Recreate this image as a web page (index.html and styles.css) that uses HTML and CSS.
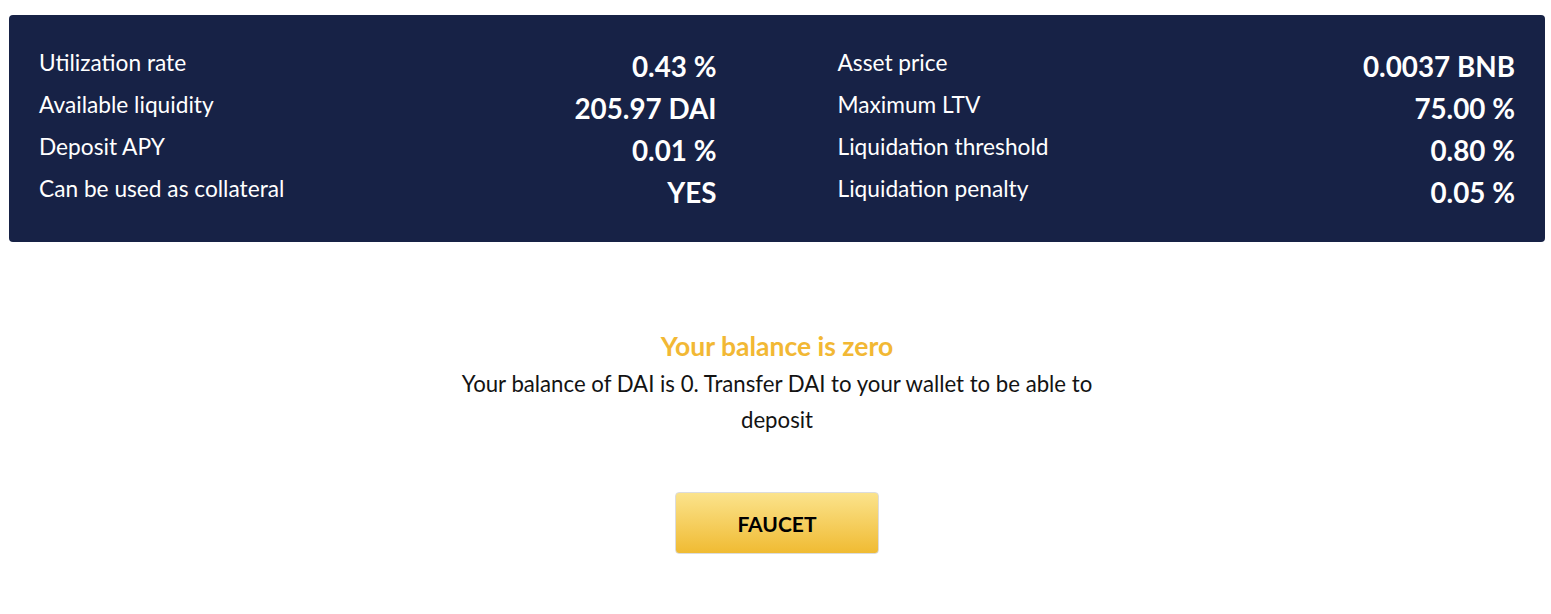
FILE: index.html
```html
<!DOCTYPE html>
<html>
<head>
<meta charset="utf-8">
<link rel="stylesheet" href="styles.css">
</head>
<body>
<section class="panel">
  <div class="col">
    <div class="row"><span class="label">Utilization rate</span><span class="value">0.43 %</span></div>
    <div class="row"><span class="label">Available liquidity</span><span class="value">205.97 DAI</span></div>
    <div class="row"><span class="label">Deposit APY</span><span class="value">0.01 %</span></div>
    <div class="row"><span class="label">Can be used as collateral</span><span class="value">YES</span></div>
  </div>
  <div class="col">
    <div class="row"><span class="label">Asset price</span><span class="value">0.0037 BNB</span></div>
    <div class="row"><span class="label">Maximum LTV</span><span class="value">75.00 %</span></div>
    <div class="row"><span class="label">Liquidation threshold</span><span class="value">0.80 %</span></div>
    <div class="row"><span class="label">Liquidation penalty</span><span class="value">0.05 %</span></div>
  </div>
</section>
<section class="empty">
  <h2 class="title">Your balance is zero</h2>
  <p class="text">Your balance of DAI is 0. Transfer DAI to your wallet to be able to deposit</p>
  <button class="faucet">FAUCET</button>
</section>
</body>
</html>
```
FILE: styles.css
```css
* { box-sizing: border-box; }
html, body { margin: 0; background: #fff; }
body {
  padding: 15px 6px 0 9px;
  font-family: Lato, "Open Sans", sans-serif;
  color: #131313;
}
.panel {
  background: #172246;
  border-radius: 4px;
  padding: 35px 30px 24px 30px;
  display: grid;
  grid-template-columns: 1fr 1fr;
  column-gap: 121px;
  color: #fff;
  height: 227px;
}
.col { display: flex; flex-direction: column; }
.row {
  display: flex;
  justify-content: space-between;
  align-items: flex-start;
  height: 42px;
}
.label { font-size: 22.7px; line-height: 26px; }
.value { font-size: 27.8px; line-height: 34px; font-weight: 700; }
.empty {
  display: flex;
  flex-direction: column;
  align-items: center;
  padding-top: 88px;
}
.title {
  margin: 0;
  font-size: 26.5px;
  font-weight: 700;
  color: #f2b834;
  line-height: 32px;
}
.text {
  margin: 4px 0 0;
  max-width: 660px;
  text-align: center;
  font-size: 22.2px;
  line-height: 36px;
}
.faucet {
  margin-top: 54px;
  width: 204px;
  height: 62px;
  border: 1px solid #dcdcdc;
  border-radius: 4px;
  background: linear-gradient(#fbe38c, #f0bb33);
  font-family: inherit;
  font-size: 21px;
  font-weight: 700;
  color: #000;
}
```
